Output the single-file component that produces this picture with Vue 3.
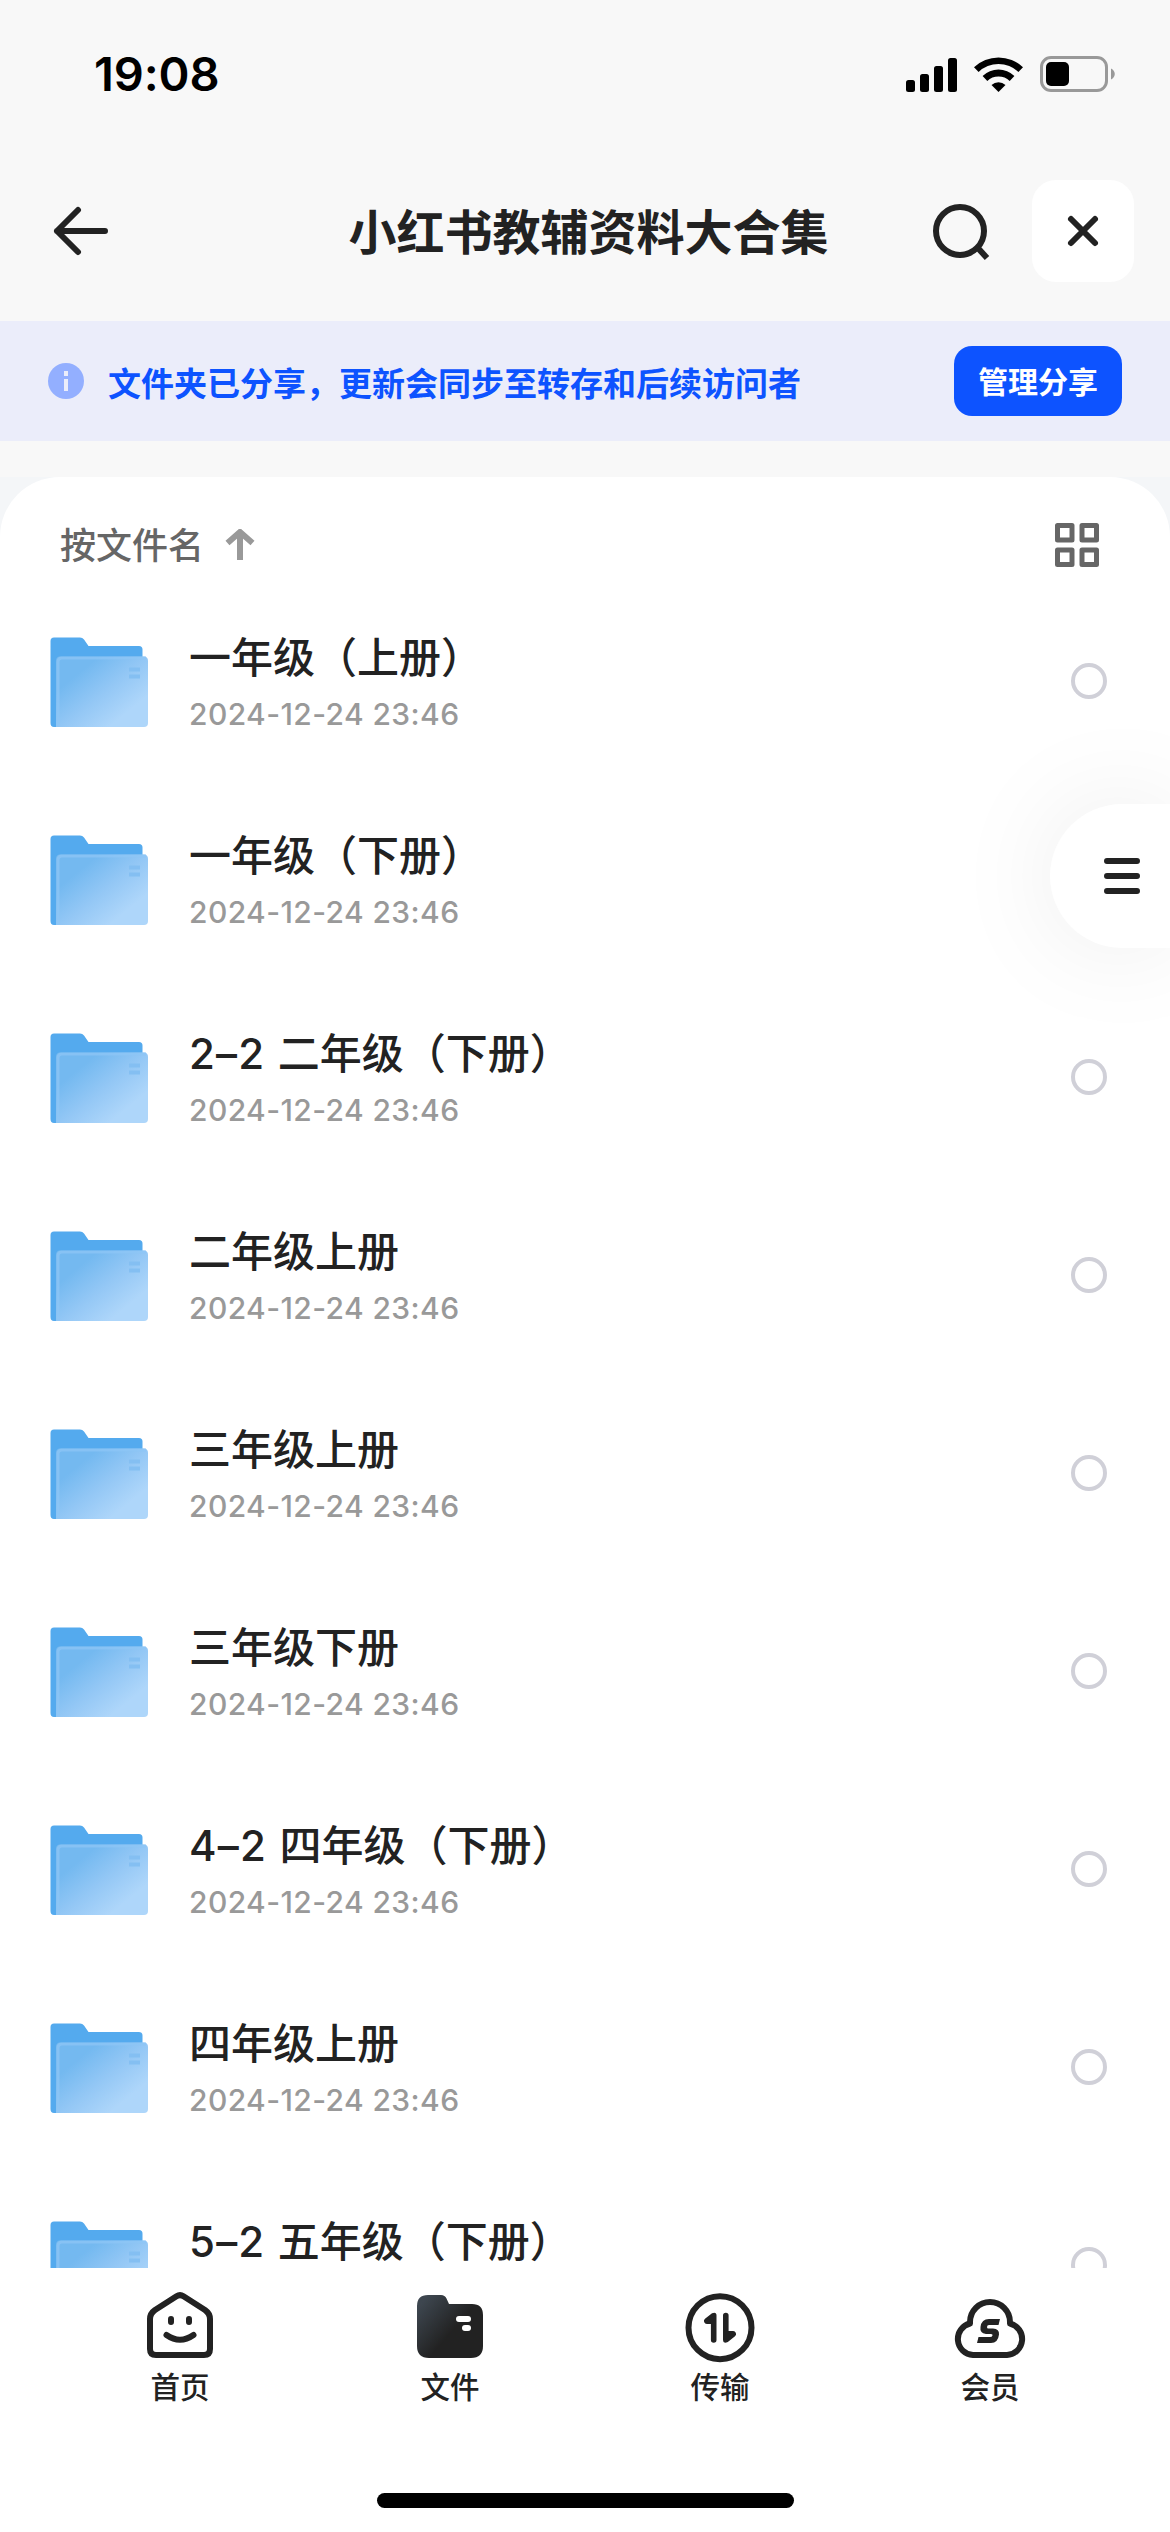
<template>
  <div class="page">
    <header class="status">
      <span class="time">19:08</span>
      <div class="status-icons">
        <svg width="51" height="36" viewBox="0 0 51 36">
          <rect x="0" y="24" width="9" height="12" rx="2.5" />
          <rect x="14" y="18" width="9" height="18" rx="2.5" />
          <rect x="28" y="10" width="9" height="26" rx="2.5" />
          <rect x="42" y="2" width="9" height="34" rx="2.5" />
        </svg>
        <svg width="49" height="36" viewBox="0 0 49 36">
          <path d="M0 11.2A35.5 35.5 0 0 1 49 11.2L44.4 16A28.8 28.8 0 0 0 4.6 16Z" />
          <path d="M8.6 20A23 23 0 0 1 40.4 20L35.7 25A16.2 16.2 0 0 0 13.3 25Z" />
          <path d="M17.5 29A10.2 10.2 0 0 1 31.5 29L24.5 36Z" />
        </svg>
        <svg width="76" height="36" viewBox="0 0 76 36">
          <rect x="1.5" y="1.5" width="65" height="33" rx="9.5" fill="none" stroke="#999" stroke-width="3" />
          <rect x="6" y="6" width="23" height="24" rx="5" />
          <path d="M71 12.5C76 15 76 21 71 23.5Z" fill="#999" />
        </svg>
      </div>
    </header>

    <nav class="toolbar">
      <svg class="back" width="60" height="60" viewBox="0 0 60 60">
        <path d="M27 9L6 30L27 51M6 30H54" />
      </svg>
      <h1 class="title">小红书教辅资料大合集</h1>
      <div class="tools">
        <svg width="60" height="60" viewBox="0 0 60 60">
          <circle cx="30" cy="30" r="24" />
          <path d="M47 46L57 57" stroke-linecap="butt" />
        </svg>
        <button class="close">
          <svg width="36" height="36" viewBox="0 0 36 36">
            <path d="M6 6L30 30M30 6L6 30" />
          </svg>
        </button>
      </div>
    </nav>

    <section class="banner">
      <svg width="36" height="36" viewBox="0 0 36 36">
        <circle cx="18" cy="18" r="18" fill="#93afff" />
        <path d="M16 8h4v5h-4zM16 16h4v12h-4z" fill="#ebedfa" />
      </svg>
      <span class="banner-text">文件夹已分享，更新会同步至转存和后续访问者</span>
      <button class="manage">管理分享</button>
    </section>

    <div class="sheet-wrap">
      <main class="sheet">
        <div class="sort">
          <span class="sort-label">按文件名</span>
          <svg class="sort-arrow" width="30" height="32" viewBox="0 0 30 32">
            <path d="M15 31V4M2.5 14L15 3L27.5 14" fill="none" stroke="#999" stroke-width="6" />
          </svg>
          <svg class="grid" width="44" height="44" viewBox="0 0 44 44">
            <rect x="2.5" y="2.5" width="14.5" height="14.5" />
            <rect x="27" y="2.5" width="14.5" height="14.5" />
            <rect x="2.5" y="27" width="14.5" height="14.5" />
            <rect x="27" y="27" width="14.5" height="14.5" />
          </svg>
        </div>
        <ul class="list">
          <li v-for="folder in folders" :key="folder.name" class="row">
            <svg class="folder" width="98" height="90" viewBox="0 0 98 90">
              <defs>
                <linearGradient id="front" x1="0.1" y1="0.15" x2="0.9" y2="0.9">
                  <stop offset="0.15" stop-color="#74b9f0" />
                  <stop offset="0.5" stop-color="#93c7f5" />
                  <stop offset="0.85" stop-color="#aed6fa" />
                </linearGradient>
              </defs>
              <path d="M4 0.5H30Q32.5 0.5 34 2.5L38.5 9H89Q92.5 9 92.5 12.5V70H20V90H4Q0.5 90 0.5 86V4Q0.5 0.5 4 0.5Z" fill="#54aaee" />
              <path d="M10 19.5H94Q98 19.5 98 24V86Q98 90 94 90H6V24Q6 19.5 10 19.5Z" fill="url(#front)" />
              <path d="M8 90V25Q8 21 12 21H96" fill="none" stroke="#8dc5f5" stroke-width="3" opacity="0.75" />
              <path d="M79 30.5h11v4H79zM79 37.5h11v4H79z" fill="#84bff2" />
            </svg>
            <div class="info">
              <div class="name">
                <span v-if="folder.prefix" class="prefix">{{ folder.prefix }}&nbsp;</span>{{ folder.name }}
              </div>
              <div class="date">2024-12-24 23:46</div>
            </div>
            <span class="radio"></span>
          </li>
        </ul>
      </main>
    </div>

    <footer class="tabs">
      <div class="tab">
        <svg width="72" height="72" viewBox="0 0 72 72">
          <path d="M32.5 7.2Q36 5 39.5 7.2L61 21Q66 24.5 66 30V60Q66 66 60 66H12Q6 66 6 60V30Q6 24.5 11 21Z" />
          <path d="M27 30v3M45 30v3" />
          <path d="M22.5 46Q36 55.5 49.5 46" />
        </svg>
        <span>首页</span>
      </div>
      <div class="tab">
        <svg width="72" height="72" viewBox="0 0 72 72">
          <defs>
            <linearGradient id="files" x1="0" y1="0.1" x2="0.55" y2="0.55">
              <stop offset="0.1" stop-color="#3d464f" />
              <stop offset="1" stop-color="#222" />
            </linearGradient>
          </defs>
          <path class="solid" d="M14 6H27Q31 6 32.5 9.5L35 15H58Q69 15 69 26V57Q69 69 57 69H15Q3 69 3 57V17Q3 6 14 6Z" fill="url(#files)" />
          <rect class="solid" x="42" y="27" width="15" height="6" rx="3" fill="#fff" />
          <rect class="solid" x="48" y="36" width="9" height="6" rx="3" fill="#fff" />
        </svg>
        <span>文件</span>
      </div>
      <div class="tab">
        <svg width="72" height="72" viewBox="0 0 72 72">
          <circle cx="36" cy="38.7" r="31.5" />
          <path class="solid" d="M32.5 26.5V51a2.8 2.8 0 0 1-5.6 0V35H23a3 3 0 0 1-2-5.3L28 24.2Q32.5 22.5 32.5 26.5ZM39 51V26.5a2.8 2.8 0 0 1 5.6 0V42H49a3 3 0 0 1 2 5.3L43.8 53Q39 55 39 51Z" fill="#222" />
        </svg>
        <span>传输</span>
      </div>
      <div class="tab">
        <svg width="72" height="72" viewBox="0 0 72 72">
          <path d="M16 34.5V33A20 20 0 0 1 56 33V34.5A16 16 0 0 1 53 66H19A16 16 0 0 1 16 34.5Z" />
          <path class="solid" d="M46 30L44.5 36H35Q33 36 33 38T35 39.5H39Q45.5 40 45 45.5Q44 54 37 54H23L24.5 48H36Q38 48 38.5 46.5T37 45H32Q25.5 44 26.5 38Q27.5 30 35 30Z" fill="#222" />
        </svg>
        <span>会员</span>
      </div>
    </footer>
    <div class="home-bar"></div>

    <button class="float">
      <svg width="36" height="36" viewBox="0 0 36 36">
        <path d="M3 3H33M3 18H33M3 33H33" />
      </svg>
    </button>
  </div>
</template>

<script setup>
const folders = [
  { name: '一年级（上册）' },
  { name: '一年级（下册）' },
  { prefix: '2–2', name: '二年级（下册）' },
  { name: '二年级上册' },
  { name: '三年级上册' },
  { name: '三年级下册' },
  { prefix: '4–2', name: '四年级（下册）' },
  { name: '四年级上册' },
  { prefix: '5–2', name: '五年级（下册）' },
]
</script>

<style>
body {
  margin: 0;
}
</style>

<style scoped>
.page {
  position: relative;
  display: flex;
  flex-direction: column;
  width: 1170px;
  height: 2532px;
  overflow: hidden;
  background: #f8f8f8;
  color: #222;
  font-family: Inter, 'Noto Sans CJK SC', sans-serif;
}
button {
  border: 0;
  padding: 0;
  font-family: inherit;
}
svg {
  display: block;
  flex: none;
}
.status {
  display: flex;
  justify-content: space-between;
  align-items: center;
  height: 148px;
  padding: 0 54px 0 94px;
  box-sizing: border-box;
  color: #000;
}
.time {
  font-size: 47px;
  font-weight: 600;
  line-height: 56px;
  letter-spacing: -0.1px;
}
.status-icons {
  display: flex;
  gap: 17px;
}
.toolbar {
  display: flex;
  align-items: center;
  justify-content: space-between;
  height: 173px;
  padding: 0 36px 7px 51px;
  box-sizing: border-box;
}
.toolbar svg,
.float svg {
  fill: none;
  stroke: #222;
  stroke-width: 6;
  stroke-linecap: round;
  stroke-linejoin: round;
}
.title {
  margin: 0 0 0 136px;
  padding-top: 3px;
  font-size: 48px;
  font-weight: 700;
  line-height: 60px;
}
.tools {
  display: flex;
  align-items: center;
  gap: 42px;
}
.close {
  display: flex;
  align-items: center;
  justify-content: center;
  width: 102px;
  height: 102px;
  border-radius: 24px;
  background: #fff;
}
.banner {
  display: flex;
  align-items: center;
  height: 120px;
  padding: 0 48px;
  background: #ebedfa;
}
.banner-text {
  margin-left: 24px;
  padding-top: 6px;
  color: #0d53ff;
  font-size: 33px;
  font-weight: 700;
  line-height: 48px;
}
.manage {
  width: 168px;
  height: 70px;
  margin-left: auto;
  padding-bottom: 2px;
  border-radius: 18px;
  background: #0d53ff;
  color: #fff;
  font-size: 30px;
  font-weight: 700;
}
.sheet-wrap {
  height: 1791px;
  margin-top: 36px;
  background: #f4f6f8;
}
.sheet {
  height: 100%;
  overflow: hidden;
  border-radius: 60px 60px 0 0;
  background: #fff;
}
.sort {
  display: flex;
  align-items: center;
  height: 106px;
  padding: 30px 71px 0 60px;
  box-sizing: border-box;
  color: #666;
  font-size: 36px;
  font-weight: 500;
}
.sort-label {
  padding-bottom: 4px;
}
.sort-arrow {
  margin-left: 21px;
}
.grid {
  margin-left: auto;
  fill: none;
  stroke: #666;
  stroke-width: 5;
  stroke-linejoin: round;
}
.list {
  margin: 0;
  padding: 0;
  list-style: none;
}
.row {
  display: flex;
  align-items: center;
  height: 198px;
  padding: 0 63px 0 50px;
}
.info {
  flex: 1;
  margin-left: 41px;
  padding-bottom: 4px;
}
.name {
  font-size: 42px;
  font-weight: 500;
  line-height: 60px;
}
.prefix {
  letter-spacing: 1.2px;
}
.date {
  color: #999;
  font-size: 30px;
  font-weight: 500;
  line-height: 36px;
  margin-top: 8px;
  letter-spacing: 0.4px;
}
.radio {
  width: 36px;
  height: 36px;
  margin-bottom: 2px;
  box-sizing: border-box;
  border: 4px solid #d0d0d8;
  border-radius: 50%;
}
.tabs {
  display: flex;
  flex: 1;
  padding: 21px 45px 0;
  background: #fff;
}
.tab {
  display: flex;
  flex: 1;
  flex-direction: column;
  align-items: center;
  font-size: 29.5px;
  font-weight: 500;
  line-height: 40px;
}
.tab svg {
  margin-bottom: 6px;
  overflow: visible;
  fill: none;
  stroke: #222;
  stroke-width: 6;
  stroke-linecap: round;
  stroke-linejoin: round;
}
.tab svg .solid {
  stroke: none;
}
.home-bar {
  display: flex;
  justify-content: center;
  height: 39px;
  background: #fff;
}
.home-bar::before {
  content: '';
  width: 417px;
  height: 15px;
  border-radius: 8px;
  background: #000;
}
.float {
  position: absolute;
  top: 804px;
  right: 0;
  display: flex;
  align-items: center;
  width: 120px;
  height: 144px;
  padding-left: 54px;
  border-radius: 72px 0 0 72px;
  background: #fff;
  box-shadow: 0 0 110px rgba(0, 0, 0, 0.08);
}
</style>
